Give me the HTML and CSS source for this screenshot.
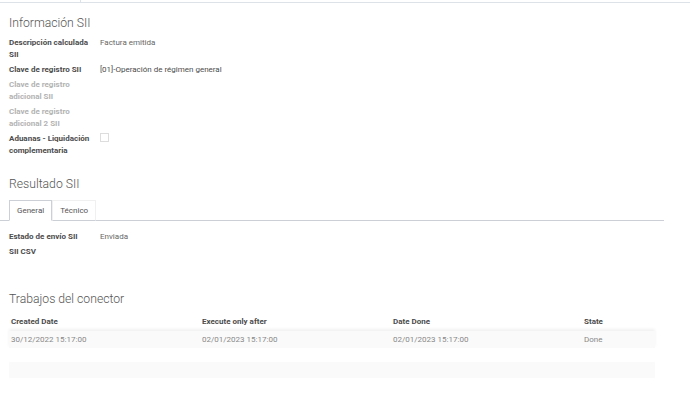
FILE: index.html
```html
<!DOCTYPE html>
<html lang="es">
<head>
  <meta charset="UTF-8" />
  <title>Factura - SII</title>
  <link rel="stylesheet" href="styles.css">
</head>
<body>
  <div class="topbar"><div class="topbar-left"></div></div>

  <div class="sheet">
    <h2>Información SII</h2>
    <div class="fields">
      <div class="label">Descripción calculada SII</div>
      <div class="value">Factura emitida</div>
      <div class="label">Clave de registro SII</div>
      <div class="value dark">[01]-Operación de régimen general</div>
      <div class="label muted">Clave de registro adicional SII</div>
      <div class="value"></div>
      <div class="label muted">Clave de registro adicional 2 SII</div>
      <div class="value"></div>
      <div class="label">Aduanas - Liquidación complementaria</div>
      <div class="value"><span class="checkbox"></span></div>
    </div>

    <h2 class="section">Resultado SII</h2>
  </div>

  <div class="tabs">
    <a class="tab active">General</a>
    <a class="tab">Técnico</a>
  </div>

  <div class="sheet">
    <div class="fields tab-fields">
      <div class="label">Estado de envío SII</div>
      <div class="value">Enviada</div>
      <div class="label">SII CSV</div>
      <div class="value"></div>
    </div>

    <h2 class="section jobs">Trabajos del conector</h2>
    <table class="jobs-table">
      <colgroup>
        <col class="col-date">
        <col class="col-date">
        <col class="col-date">
        <col>
      </colgroup>
      <thead>
        <tr>
          <th>Created Date</th>
          <th>Execute only after</th>
          <th>Date Done</th>
          <th>State</th>
        </tr>
      </thead>
      <tbody>
        <tr>
          <td>30/12/2022 15:17:00</td>
          <td>02/01/2023 15:17:00</td>
          <td>02/01/2023 15:17:00</td>
          <td>Done</td>
        </tr>
        <tr class="spacer"><td colspan="4"></td></tr>
      </tbody>
      <tfoot>
        <tr><td colspan="4"></td></tr>
      </tfoot>
    </table>
  </div>
</body>
</html>
```

FILE: styles.css
```css
body { margin: 0; font-family: Roboto, "Noto Sans", sans-serif; font-size: 8px; color: #666; background: #fff; }
.topbar { height: 2px; border-bottom: 1px solid #dde2e8; }
.topbar-left { width: 80px; height: 2px; border-right: 1px solid #dde2e8; }

.sheet { padding: 0 9px; }
h2 { font-size: 12.2px; font-weight: 300; color: #555; margin: 13px 0 6px; line-height: 15px; }
h2.section { margin-top: 20px; margin-bottom: 8px; }
h2.jobs { margin-top: 34px; margin-bottom: 7px; }

.fields { display: grid; grid-template-columns: 91px 1fr; row-gap: 3px; line-height: 12px; }
.label { font-weight: bold; color: #4c4c4c; padding-right: 6px; }
.label.muted { color: #b3b3b3; }
.value { color: #666; }
.value.dark { color: #4c4c4c; }
.checkbox { display: inline-block; width: 7px; height: 7px; border: 1px solid #ddd; }

.tabs { display: flex; padding-left: 9px; width: 655px; border-bottom: 1px solid #ccd0d6; }
.tab { padding: 5px 7px 4px; color: #555; border: 1px solid transparent; margin-bottom: -1px; line-height: 10px; }
.tab.active { border-color: #ccd0d6; border-bottom-color: #fff; background: #fff; }
.tab:not(.active) { border-color: #f0f0f0; border-bottom-color: transparent; }

.tab-fields { margin-top: 10px; }

.jobs-table { width: 646px; border-collapse: collapse; table-layout: fixed; }
.jobs-table .col-date { width: 191px; }
.jobs-table th { text-align: left; font-weight: bold; color: #4c4c4c; padding: 3px 2px 5px; }
.jobs-table td { padding: 4px 2px; color: #888; height: 8px; }
.jobs-table tbody tr:first-child { box-shadow: 0 -2px 3px rgba(0,0,0,0.06); background: #fafafa; }
.jobs-table .spacer td { height: 14px; padding: 0; }
.jobs-table tfoot td { background: #fafafa; height: 16px; padding: 0; }
```
